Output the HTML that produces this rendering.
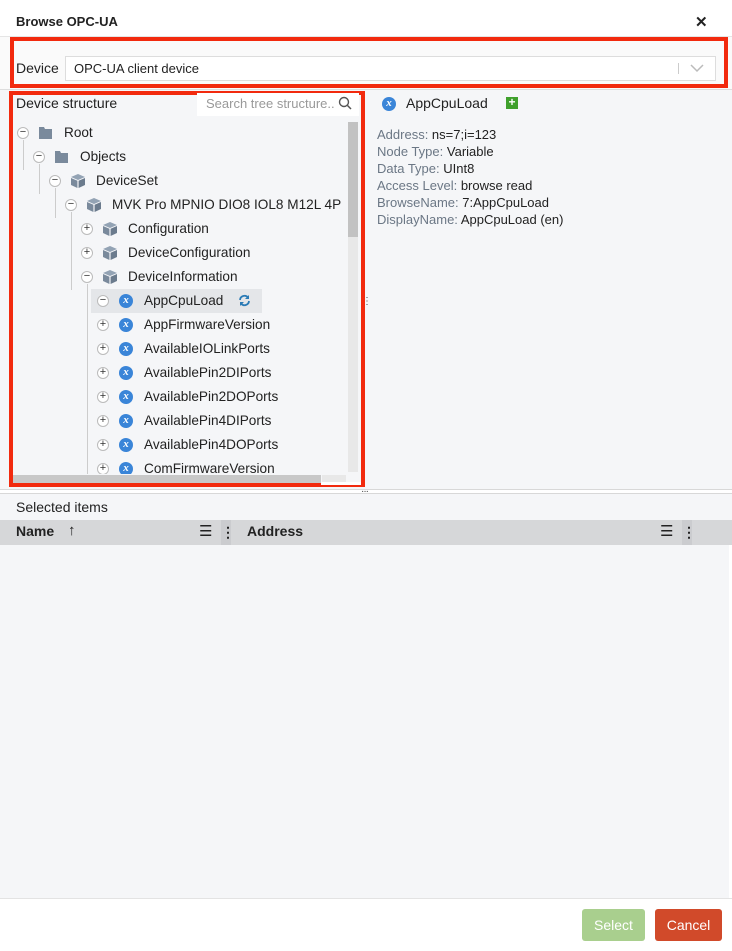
<!DOCTYPE html>
<html><head><style>
*{box-sizing:border-box;margin:0;padding:0}
body{width:732px;height:951px;background:#f5f6f8;font-family:"Liberation Sans",sans-serif;position:relative;overflow:hidden;color:#222}
.abs{position:absolute}
.tog{position:absolute;width:12px;height:12px;border:1px solid #bbb;border-radius:50%;background:#fff;font-size:11px;line-height:9px;text-align:center;color:#333}
.row{position:absolute;font-size:13.6px;color:#222;height:20px;line-height:20px;white-space:nowrap}
.vline{position:absolute;width:1px;background:#ccc}
.xi{position:absolute;width:14px;height:14px;border-radius:50%;background:#3a85d8;color:#fff;font-size:11px;font-style:italic;font-weight:bold;line-height:13px;text-align:center;font-family:"Liberation Serif",serif}
.lbl{color:#6b7785}
</style></head><body>
<div class="abs" style="left:0;top:0;width:732px;height:37px;background:#fff;border-bottom:1px solid #e5e5e5"></div>
<div class="abs" style="left:16px;top:14px;font-size:13px;font-weight:bold">Browse OPC-UA</div>
<div class="abs" style="left:695px;top:13px;font-size:15px;font-weight:bold">✕</div>
<div class="abs" style="left:0;top:37px;width:732px;height:53px;background:#fafafa;border-bottom:1px solid #ddd"></div>
<div class="abs" style="left:10px;top:37px;width:718px;height:51px;border:4px solid #f22a0e"></div>
<div class="abs" style="left:16px;top:60px;font-size:14px">Device</div>
<div class="abs" style="left:65px;top:56px;width:651px;height:25px;background:#fff;border:1px solid #ddd"></div>
<div class="abs" style="left:74px;top:61px;font-size:13px">OPC-UA client device</div>
<div class="abs" style="left:678px;top:63px;width:1px;height:11px;background:#ccc"></div>
<svg class="abs" style="left:690px;top:64px" width="14" height="9"><path d="M1 1l6 6 6-6" stroke="#bbb" stroke-width="1.5" fill="none"/></svg>

<div class="abs" style="left:9px;top:91px;width:356px;height:396px;border:4px solid #f22a0e"></div>
<div class="abs" style="left:16px;top:95px;font-size:14px">Device structure</div>
<div class="abs" style="left:197px;top:93px;width:162px;height:23px;background:#fff"></div>
<div class="abs" style="left:206px;top:96px;font-size:13px;color:#999">Search tree structure..</div>
<svg class="abs" style="left:338px;top:96px" width="14" height="14"><circle cx="6" cy="6" r="4.5" stroke="#555" stroke-width="1.4" fill="none"/><path d="M9.5 9.5l3.5 3.5" stroke="#555" stroke-width="1.5"/></svg>
<div class="abs" style="left:348px;top:122px;width:10px;height:350px;background:#e8e8e8"></div>
<div class="abs" style="left:348px;top:122px;width:10px;height:115px;background:#c2c2c2"></div>
<div class="abs" style="left:13px;top:475px;width:308px;height:8px;background:#c8c8c8"></div>
<div class="abs" style="left:322px;top:475px;width:24px;height:8px;background:#e8e8e8"></div>

<div class="abs" style="left:0;top:118px;width:347px;height:356px;overflow:hidden">
<div style="position:absolute;left:0;top:-118px;width:347px;height:600px">
<div class="vline" style="left:23px;top:140px;height:30px"></div>
<div class="vline" style="left:39px;top:164px;height:30px"></div>
<div class="vline" style="left:55px;top:188px;height:30px"></div>
<div class="vline" style="left:71px;top:212px;height:78px"></div>
<div class="vline" style="left:87px;top:284px;height:190px"></div>
<div class="abs" style="left:91px;top:289px;width:171px;height:24px;background:#e4e6e9"></div>
<div id="tree"></div>
<svg class="abs" style="left:238px;top:294px" width="13" height="13"><path d="M2 6a4.5 4.5 0 0 1 8-2.5M11 7a4.5 4.5 0 0 1-8 2.5" stroke="#2b7bb6" stroke-width="1.8" fill="none"/><path d="M11 1v4H7z M2 12V8h4z" fill="#2b7bb6"/></svg>
</div></div>
<script>
var rows=[[0,'Root','f'],[1,'Objects','f'],[2,'DeviceSet','c'],[3,'MVK Pro MPNIO DIO8 IOL8 M12L 4P','c'],[4,'Configuration','c','+'],[4,'DeviceConfiguration','c','+'],[4,'DeviceInformation','c'],[5,'AppCpuLoad','x'],[5,'AppFirmwareVersion','x','+'],[5,'AvailableIOLinkPorts','x','+'],[5,'AvailablePin2DIPorts','x','+'],[5,'AvailablePin2DOPorts','x','+'],[5,'AvailablePin4DIPorts','x','+'],[5,'AvailablePin4DOPorts','x','+'],[5,'ComFirmwareVersion','x','+']];
var h='';
rows.forEach(function(r,i){var cy=133+24*i,x=17+16*r[0];
h+='<div class="tog" style="left:'+x+'px;top:'+(cy-6)+'px">'+(r[3]||'−')+'</div>';
if(r[2]=='f')h+='<svg class="abs" style="left:'+(x+22)+'px;top:'+(cy-7)+'px" width="15" height="13"><path d="M0 1h5l1 2h7v10H0z" fill="#7a8a9c"/></svg>';
else if(r[2]=='c')h+='<svg class="abs" style="left:'+(x+22)+'px;top:'+(cy-7)+'px" width="14" height="14"><path d="M7 0l7 3-7 3-7-3z" fill="#93a3b4"/><path d="M0 4l6.4 2.8V14L0 11z" fill="#7a8a9c"/><path d="M14 4L7.6 6.8V14L14 11z" fill="#6b7b8d"/></svg>';
else h+='<div class="xi" style="left:'+(x+22)+'px;top:'+(cy-7)+'px">x</div>';
h+='<div class="row" style="left:'+(x+47)+'px;top:'+(cy-10)+'px">'+r[1]+'</div>';});
document.getElementById('tree').innerHTML=h;
</script>
<div class="abs" style="left:321px;top:482px;width:40px;height:3px;background:#fff"></div>

<div class="xi" style="left:382px;top:97px">x</div>
<div class="abs" style="left:406px;top:95px;font-size:14px">AppCpuLoad</div>
<div class="abs" style="left:506px;top:97px;width:12px;height:12px;background:#3fa02c;color:#fff;font-size:12px;line-height:11px;text-align:center;font-weight:bold">+</div>
<div class="abs" style="left:377px;top:126px;font-size:13px;line-height:17px">
<div><span class="lbl">Address:</span> ns=7;i=123</div>
<div><span class="lbl">Node Type:</span> Variable</div>
<div><span class="lbl">Data Type:</span> UInt8</div>
<div><span class="lbl">Access Level:</span> browse read</div>
<div><span class="lbl">BrowseName:</span> 7:AppCpuLoad</div>
<div><span class="lbl">DisplayName:</span> AppCpuLoad (en)</div></div>
<div class="abs" style="left:362px;top:296px;font-size:10px;color:#555">⋮</div>

<div class="abs" style="left:0;top:489px;width:732px;height:5px;background:#fff;border-top:1px solid #d8d8d8;border-bottom:1px solid #d8d8d8"></div>
<div class="abs" style="left:361px;top:486px;font-size:10px;color:#444;letter-spacing:-1px">···</div>
<div class="abs" style="left:16px;top:499px;font-size:14px">Selected items</div>
<div class="abs" style="left:0;top:520px;width:732px;height:25px;background:#d6d7d9"></div>
<div class="abs" style="left:16px;top:523px;font-size:14px;font-weight:bold">Name</div>
<div class="abs" style="left:68px;top:522px;font-size:15px">↑</div>
<div class="abs" style="left:199px;top:522px;font-size:15px">☰</div>
<div class="abs" style="left:221px;top:520px;width:10px;height:25px;background:#cbcccf;font-size:14px;font-weight:bold;text-align:center;line-height:25px">⋮</div>
<div class="abs" style="left:247px;top:523px;font-size:14px;font-weight:bold">Address</div>
<div class="abs" style="left:660px;top:522px;font-size:15px">☰</div>
<div class="abs" style="left:682px;top:520px;width:10px;height:25px;background:#cbcccf;font-size:14px;font-weight:bold;text-align:center;line-height:25px">⋮</div>
<div class="abs" style="left:729px;top:545px;width:3px;height:353px;background:#fff"></div>

<div class="abs" style="left:0;top:898px;width:732px;height:53px;background:#fff;border-top:1px solid #e3e3e3"></div>
<div class="abs" style="left:582px;top:909px;width:63px;height:32px;background:#a9cf8e;border-radius:3px;color:#fff;font-size:14px;text-align:center;line-height:32px">Select</div>
<div class="abs" style="left:655px;top:909px;width:67px;height:32px;background:#d14a2a;border-radius:3px;color:#fff;font-size:14px;text-align:center;line-height:32px">Cancel</div>
</body></html>
